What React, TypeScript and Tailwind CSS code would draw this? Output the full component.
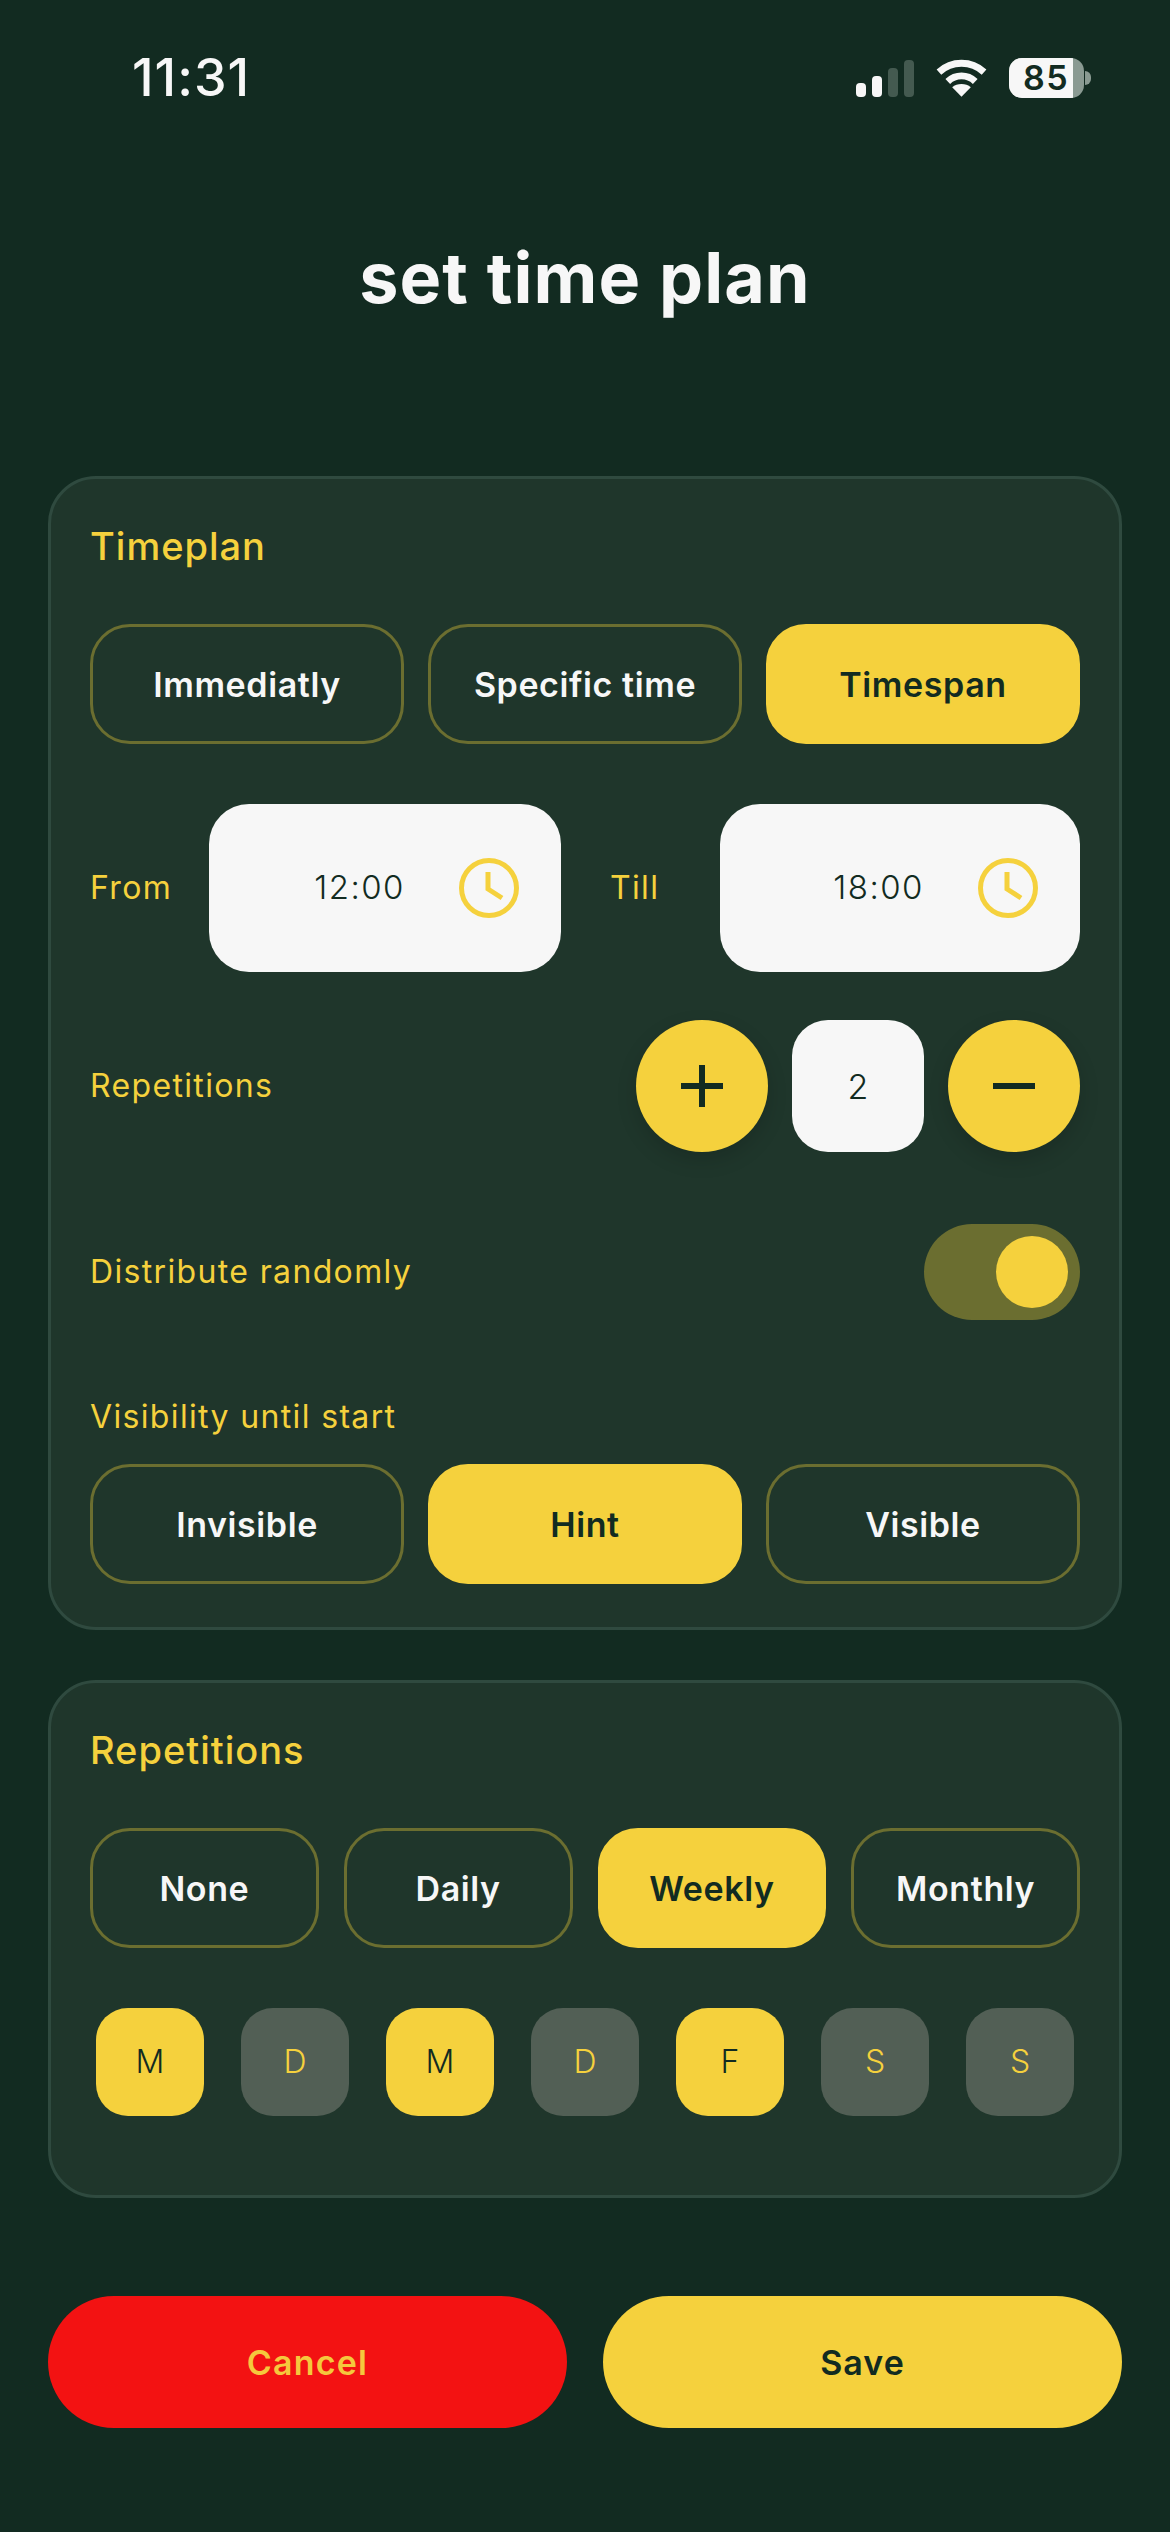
const yellow = 'bg-[#f5d13d]';

function ChoiceButton({ label, active }: { label: string; active?: boolean }) {
  return (
    <div
      className={`flex-1 h-[120px] rounded-[40px] flex items-center justify-center text-[34px] font-semibold tracking-[0.6px] border-[3px] ${
        active ? 'bg-[#f5d13d] border-[#f5d13d] text-[#122b21]' : 'border-[#6b6e30] text-[#f7f7f7]'
      }`}
    >
      {label}
    </div>
  );
}

function ClockIcon() {
  return (
    <svg width="60" height="60" viewBox="0 0 60 60" fill="none" stroke="#f5d13d" strokeWidth="5" className="shrink-0">
      <circle cx="30" cy="30" r="27.5" />
      <path d="M29 14v17l14 9" />
    </svg>
  );
}

function TimeField({ value, width }: { value: string; width: string }) {
  return (
    <div className={`${width} h-[168px] rounded-[40px] bg-[#f7f7f7] flex items-center justify-end pr-[42px] gap-[54px]`}>
      <span className="text-[33px] font-[350] tracking-[1.5px] text-[#122b21]">{value}</span>
      <ClockIcon />
    </div>
  );
}

function Day({ label, active }: { label: string; active?: boolean }) {
  return (
    <div
      className={`w-[108px] h-[108px] rounded-[32px] flex items-center justify-center text-[32px] font-[350] ${
        active ? 'bg-[#f5d13d] text-[#122b21]' : 'bg-[#525f55] text-[#f5d13d]'
      }`}
    >
      {label}
    </div>
  );
}

function StatusBar() {
  return (
    <div className="h-[156px] flex items-center justify-between pl-[132px] pr-[79px]">
      <span className="text-[52px] font-medium text-[#f7f7f7] tracking-[1px]">11:31</span>
      <div className="flex items-center">
        <svg width="58" height="37" viewBox="0 0 58 37" fill="#f7f7f7">
          <rect x="0" y="23" width="10" height="14" rx="4" />
          <rect x="16" y="16" width="10" height="21" rx="4" />
          <rect x="32" y="8" width="10" height="29" rx="4" fill="#445a50" />
          <rect x="48" y="0" width="10" height="37" rx="4" fill="#445a50" />
        </svg>
        <svg width="51" height="38" viewBox="0 0 52 38" fill="none" stroke="#f7f7f7" strokeWidth="7" className="ml-[22px]">
          <path d="M3 13C16 1 36 1 49 13" />
          <path d="M12 22.5C20 15 32 15 40 22.5" />
          <path d="M26 38l-9.5-9.5c5-4.5 14-4.5 19 0z" fill="#f7f7f7" stroke="none" />
        </svg>
        <div className="ml-[22px] w-[75px] h-[40px] rounded-[13px] bg-[#8a9a92] overflow-hidden">
          <div className="w-[64px] h-full bg-[#f7f7f7] flex items-center pl-[14px] text-[34px] font-semibold leading-none tracking-[1.5px] text-[#122b21]">
            85
          </div>
        </div>
        <div className="w-[6px] h-[14px] rounded-r-full bg-[#8a9a92] ml-[1px]" />
      </div>
    </div>
  );
}

export default function App() {
  return (
    <div className="w-[1170px] h-[2532px] bg-[#122b21] font-['Inter',sans-serif] overflow-hidden">
      <StatusBar />

      <h1 className="mt-[78px] text-center text-[70px] leading-[88px] font-bold tracking-[1.1px] text-[#f7f7f7]">
        set time plan
      </h1>

      <div className="mx-[48px] mt-[154px] flex flex-col gap-[50px]">
        {/* Timeplan card */}
        <section className="h-[1154px] rounded-[48px] bg-[#1f362b] border-[3px] border-[#2f4a3f] px-[39px] pt-[44px]">
          <h2 className="text-[38px] leading-[46px] font-medium tracking-[1px] text-[#f5d13d]">Timeplan</h2>

          <div className="mt-[55px] flex gap-[24px]">
            <ChoiceButton label="Immediatly" />
            <ChoiceButton label="Specific time" />
            <ChoiceButton label="Timespan" active />
          </div>

          <div className="mt-[60px] flex items-center text-[32px] tracking-[1.35px] text-[#f5d13d]">
            <span className="w-[119px]">From</span>
            <TimeField value="12:00" width="w-[352px]" />
            <span className="ml-[49px] flex-1">Till</span>
            <TimeField value="18:00" width="w-[360px]" />
          </div>

          <div className="mt-[48px] flex items-center justify-between">
            <span className="text-[32px] tracking-[1.35px] text-[#f5d13d]">Repetitions</span>
            <div className="flex gap-[24px]">
              <div className={`w-[132px] h-[132px] rounded-full ${yellow} flex items-center justify-center shadow-[0_8px_20px_rgba(0,0,0,0.15)]`}>
                <svg width="42" height="42" viewBox="0 0 42 42" stroke="#122b21" strokeWidth="6">
                  <path d="M0 21h42M21 0v42" />
                </svg>
              </div>
              <div className="w-[132px] h-[132px] rounded-[36px] bg-[#f7f7f7] flex items-center justify-center text-[34px] font-[350] text-[#122b21]">
                2
              </div>
              <div className={`w-[132px] h-[132px] rounded-full ${yellow} flex items-center justify-center shadow-[0_8px_20px_rgba(0,0,0,0.15)]`}>
                <svg width="42" height="42" viewBox="0 0 42 42" stroke="#122b21" strokeWidth="6">
                  <path d="M0 21h42" />
                </svg>
              </div>
            </div>
          </div>

          <div className="mt-[72px] flex items-center justify-between">
            <span className="text-[32px] tracking-[1.35px] text-[#f5d13d]">Distribute randomly</span>
            <div className="w-[156px] h-[96px] rounded-full bg-[#6b6e30] flex items-center justify-end pr-[12px]">
              <div className={`w-[72px] h-[72px] rounded-full ${yellow}`} />
            </div>
          </div>

          <div className="mt-[77px] text-[32px] leading-[40px] tracking-[1.35px] text-[#f5d13d]">Visibility until start</div>

          <div className="mt-[27px] flex gap-[24px]">
            <ChoiceButton label="Invisible" />
            <ChoiceButton label="Hint" active />
            <ChoiceButton label="Visible" />
          </div>
        </section>

        {/* Repetitions card */}
        <section className="h-[518px] rounded-[48px] bg-[#1f362b] border-[3px] border-[#2f4a3f] px-[39px] pt-[44px]">
          <h2 className="text-[38px] leading-[46px] font-medium tracking-[1px] text-[#f5d13d]">Repetitions</h2>

          <div className="mt-[55px] flex gap-[25px]">
            <ChoiceButton label="None" />
            <ChoiceButton label="Daily" />
            <ChoiceButton label="Weekly" active />
            <ChoiceButton label="Monthly" />
          </div>

          <div className="mt-[60px] px-[6px] flex justify-between">
            <Day label="M" active />
            <Day label="D" />
            <Day label="M" active />
            <Day label="D" />
            <Day label="F" active />
            <Day label="S" />
            <Day label="S" />
          </div>
        </section>
      </div>

      <div className="mx-[48px] mt-[98px] flex gap-[36px]">
        <div className="flex-1 h-[132px] rounded-full bg-[#f31212] flex items-center justify-center text-[34px] font-semibold tracking-[1.2px] text-[#f5c83d]">
          Cancel
        </div>
        <div className="flex-1 h-[132px] rounded-full bg-[#f5d13d] flex items-center justify-center text-[34px] font-semibold tracking-[1px] text-[#122b21]">
          Save
        </div>
      </div>
    </div>
  );
}
